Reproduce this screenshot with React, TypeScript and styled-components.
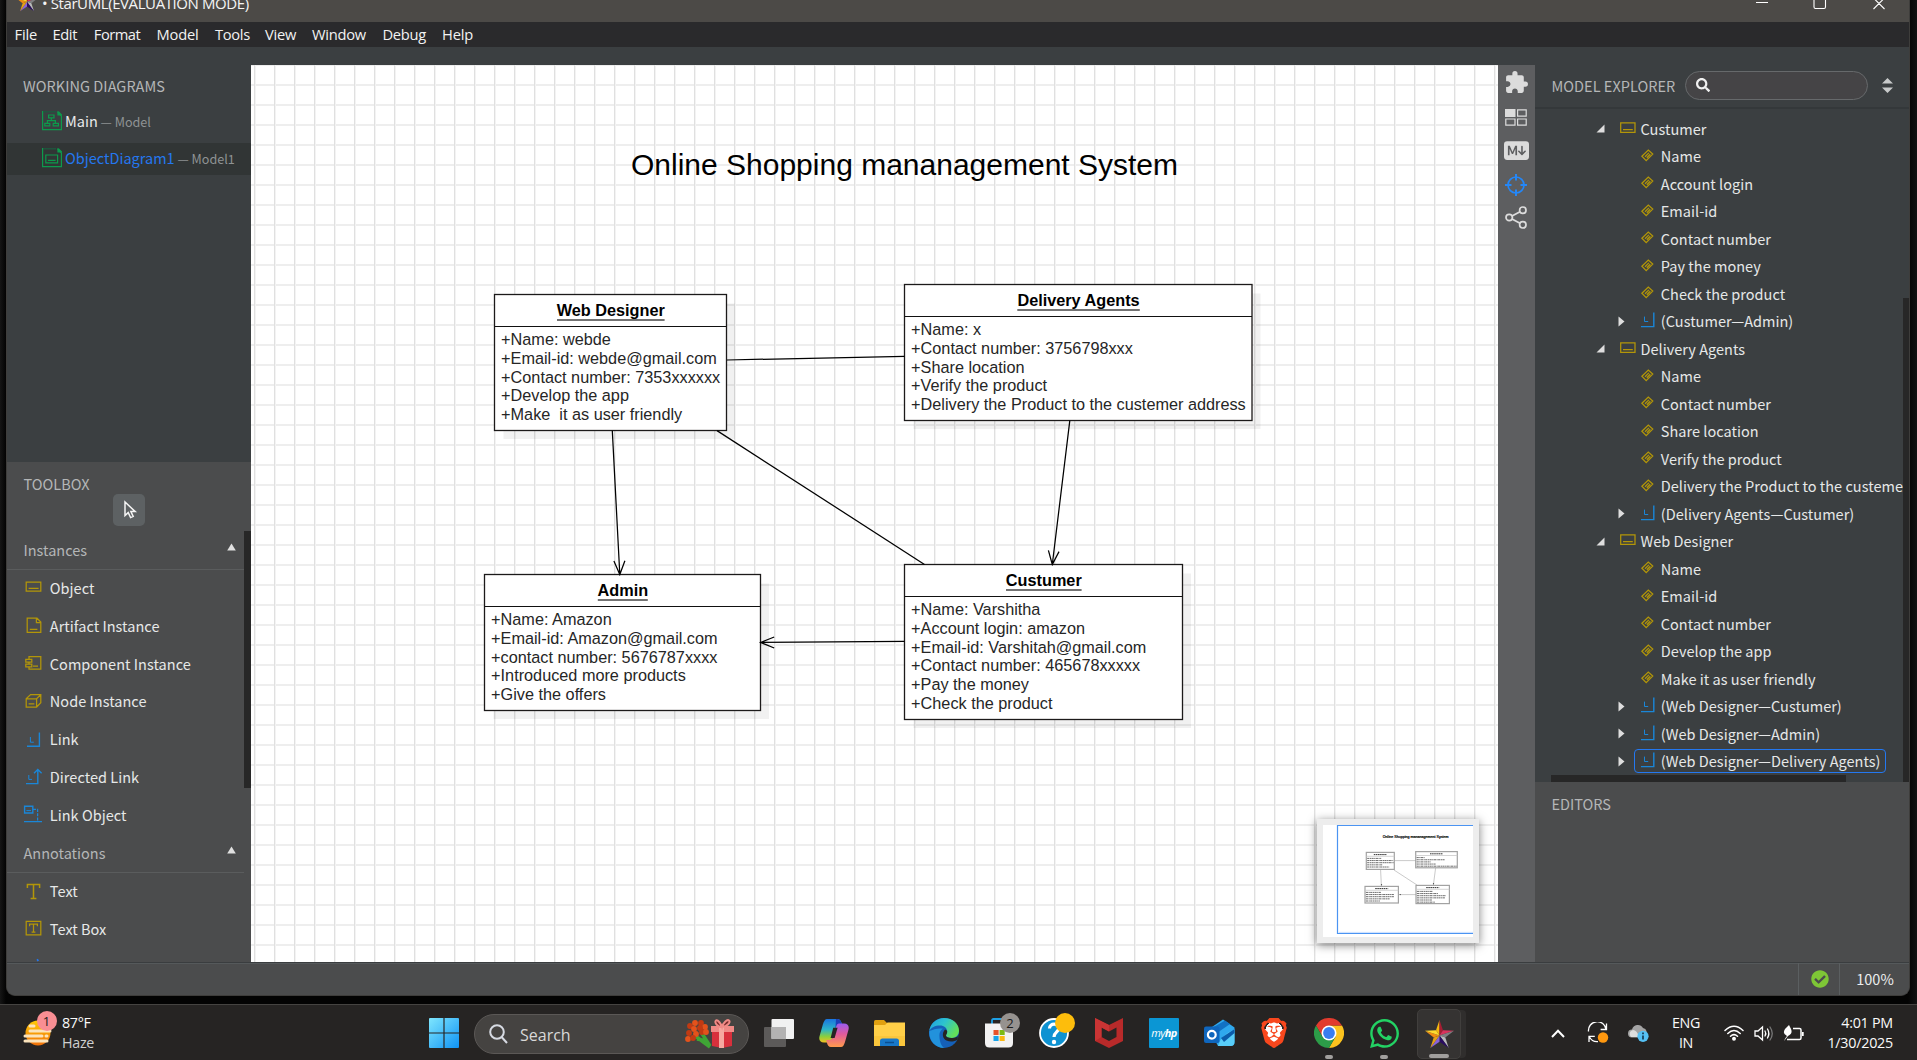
import React from "react";
import styled, { createGlobalStyle } from "styled-components";
import { MdExtension } from "react-icons/md";
import { BsMarkdownFill } from "react-icons/bs";
import { FaSearch, FaWhatsapp, FaCheckCircle } from "react-icons/fa";
import { SiBrave } from "react-icons/si";

const UI = `"Noto Sans CJK SC", "Noto Sans", sans-serif`;
const SYS = `"Open Sans", "Noto Sans", sans-serif`;
const GOLD = "#b39608";
const BLUE = "#1a86d8";

const Global = createGlobalStyle`
  *, *::before, *::after { box-sizing: border-box; }
  html, body { margin: 0; background: #050505; }
  body { overflow: hidden; font-family: ${UI}; }
  svg { display: block; flex: none; }
`;

const Desktop = styled.div`
  width: 1917px;
  height: 1060px;
  display: flex;
  flex-direction: column;
  background: linear-gradient(90deg, #151515 0, #030303 6px, #030303 1908px, #121212 1917px);
  overflow: hidden;
`;

const AppWindow = styled.div`
  width: 1904px;
  height: 996px;
  margin: 0 0 8px 6px;
  flex: none;
  display: flex;
  flex-direction: column;
  border: 1px solid #3e3d3b;
  border-top: 0;
  border-radius: 0 0 9px 9px;
  overflow: hidden;
  background: #4b4c4d;
`;

/* ---------- title and menu ---------- */

const TitleBar = styled.div`
  height: 22px;
  flex: none;
  display: flex;
  background: #4c4a47;
  color: #f4f4f4;
  font: 15px/22px ${SYS};
`;
const TitleText = styled.div`
  width: 1706px;
  padding-left: 6px;
  margin-top: -8px;
  white-space: pre;
  letter-spacing: -0.41px;
`;
const StarSlot = styled.div`
  width: 29px;
  padding-left: 9px;
  margin-top: -10px;
`;

const MenuBar = styled.nav`
  height: 25px;
  flex: none;
  display: flex;
  padding-left: 7.5px;
  background: #2a2a2c;
`;
const MenuItem = styled.span<{ $w: number; $ls: number }>`
  width: ${(p) => p.$w}px;
  flex: none;
  color: #f2f2f2;
  font: 14.7px/25px ${SYS};
  letter-spacing: ${(p) => p.$ls}px;
  white-space: nowrap;
`;

/* ---------- main layout ---------- */

const Gutter = styled.div`
  height: 18px;
  flex: none;
  background: #3b3f41;
`;
const Body = styled.div`
  height: 897px;
  flex: none;
  display: flex;
`;
const Sidebar = styled.aside`
  width: 244px;
  flex: none;
  display: flex;
  flex-direction: column;
`;
const PanelTitle = styled.div<{ $ls?: number }>`
  color: #b4b6b7;
  font-size: 14.5px;
  line-height: 24px;
  letter-spacing: ${(p) => p.$ls ?? 0}px;
  white-space: nowrap;
`;

const Working = styled.section`
  height: 397px;
  flex: none;
  background: #3b3f41;
  padding-top: 9px;
  > ${PanelTitle} {
    padding-left: 16px;
    margin-bottom: 8px;
    letter-spacing: 0.05px;
  }
`;
const DiagramRow = styled.div<{ $active?: boolean }>`
  height: ${(p) => (p.$active ? 32 : 37)}px;
  display: flex;
  align-items: center;
  padding: ${(p) => (p.$active ? "0 0 3px 35px" : "0 0 8px 35px")};
  gap: 3px;
  background: ${(p) => (p.$active ? "#313535" : "transparent")};
  color: ${(p) => (p.$active ? "#2478f0" : "#e8eaea")};
  font-size: 14.5px;
  white-space: nowrap;
`;
const Muted = styled.span`
  color: #8f9394;
  font-size: 12.6px;
  white-space: pre;
`;

const Toolbox = styled.section`
  flex: 1;
  min-height: 0;
  overflow: hidden;
  background: #4b4c4d;
  padding-top: 10px;
  > ${PanelTitle} {
    padding-left: 16.5px;
  }
`;
const CursorButton = styled.div`
  width: 32px;
  height: 32px;
  margin: -2px 0 5px 106px;
  padding-left: 2px;
  display: flex;
  align-items: center;
  justify-content: center;
  border-radius: 5px;
  background: #5d6163;
`;
const ToolScroll = styled.div`
  display: flex;
  align-items: flex-start;
`;
const ToolList = styled.div`
  width: 237px;
`;
const ScrollThumb = styled.div`
  width: 7px;
  height: 257px;
  background: #272727;
`;
const ToolGroup = styled.div`
  height: 38.6px;
  display: flex;
  align-items: center;
  justify-content: space-between;
  padding: 0 8.5px 0 16.5px;
  border-bottom: 1px solid #5a5c5d;
  color: #b4b6b7;
  font-size: 14.5px;
  svg {
    margin-bottom: 6px;
  }
`;
const ToolItem = styled.div`
  height: 37.8px;
  display: flex;
  align-items: center;
  padding: 0 0 2px 17px;
  gap: 7.8px;
  color: #e6e8e8;
  font-size: 14.5px;
  letter-spacing: 0.03px;
  white-space: nowrap;
`;

const CanvasArea = styled.main`
  position: relative;
  width: 1247px;
  flex: none;
  overflow: hidden;
  background-color: #fff;
  background-image: linear-gradient(90deg, #e0e0e0 1px, #f3f3f3 1px 2px, transparent 2px),
    linear-gradient(#eeeeee 2px, transparent 2px);
  background-size: 20px 20px;
  background-position: 3px 0, 0 -1px;
`;
const ShapeText = styled.text`
  font: 16.25px "Liberation Sans", Arial, sans-serif;
  fill: #262626;
  white-space: pre;
`;
const ShapeTitle = styled.text`
  font: bold 16.25px "Liberation Sans", Arial, sans-serif;
  fill: #000;
  text-anchor: middle;
`;
const CanvasTitle = styled.text`
  font: 30px "Liberation Sans", Arial, sans-serif;
  fill: #000;
`;
const TinyTitle = styled.text`
  font: 3.6px "Liberation Sans", Arial, sans-serif;
  fill: #000;
  stroke: #000;
  stroke-width: 0.2px;
`;
const Minimap = styled.div`
  position: absolute;
  left: 1066px;
  top: 754px;
  width: 162px;
  height: 124px;
  border: 6px solid #ededed;
  background: #fff;
  box-shadow: 0 2px 9px rgba(0, 0, 0, 0.5);
  overflow: hidden;
`;

const ToolStrip = styled.div`
  width: 37px;
  flex: none;
  background: #5d5e60;
  display: flex;
  flex-direction: column;
  align-items: center;
  padding: 0 1px 0 0;
  color: #dcdcdc;
`;
const StripIcon = styled.div<{ $h: number }>`
  height: ${(p) => p.$h}px;
  display: flex;
  align-items: center;
`;

const Explorer = styled.aside`
  flex: 1;
  min-width: 0;
  display: flex;
  flex-direction: column;
`;
const ExplorerHead = styled.div`
  height: 44px;
  flex: none;
  display: flex;
  align-items: center;
  padding: 0 16px 2px 16px;
  background: #3b3f41;
  border-bottom: 2px solid #34383a;
  > ${PanelTitle} {
    padding: 2px 0 0 0.5px;
    letter-spacing: 0.03px;
  }
`;
const SearchField = styled.div`
  width: 183px;
  height: 29px;
  margin: 0 14px 0 auto;
  display: flex;
  align-items: center;
  padding-left: 10px;
  border: 1px solid #66696b;
  border-radius: 15px;
  background: #454446;
  color: #f0f0f0;
`;
const TreeArea = styled.div`
  height: 666px;
  flex: none;
  display: flex;
  justify-content: flex-end;
  background: #3b3f41;
  padding-left: 16px;
`;
const TreeClip = styled.div`
  flex: 1;
  min-width: 0;
  padding-top: 6px;
  overflow: hidden;
`;
const TreeThumb = styled.div`
  width: 6px;
  height: 477px;
  align-self: flex-end;
  background: #272727;
`;
const TreeFoot = styled.div`
  height: 7px;
  flex: none;
  display: flex;
  justify-content: space-between;
  background: #3b3f41;
  padding-left: 16px;
`;
const TreeThumbH = styled.div`
  width: 295px;
  height: 7px;
  background: #272727;
`;
const TreeCorner = styled.div`
  width: 6px;
  height: 7px;
  background: #272727;
`;
const TreeRow = styled.div<{ $leaf: boolean }>`
  height: 27.5px;
  display: flex;
  align-items: center;
  padding-left: ${(p) => (p.$leaf ? 66.5 : 44.5)}px;
  color: #e6e8e8;
  font-size: 14.5px;
  letter-spacing: 0.02px;
  white-space: nowrap;
`;
const Twisty = styled.span<{ $w: number }>`
  width: ${(p) => p.$w}px;
  flex: none;
`;
const NodeLabel = styled.span<{ $selected?: boolean; $gap: number }>`
  height: 24px;
  flex: none;
  display: flex;
  align-items: center;
  gap: ${(p) => p.$gap}px;
  padding: 0 5px 0 6px;
  line-height: 22px;
  border: 1px solid ${(p) => (p.$selected ? "#2478f0" : "transparent")};
  border-radius: 4px;
  > svg {
    margin-bottom: 2px;
  }
`;
const Editors = styled.div`
  flex: 1;
  background: #4b4c4d;
  padding: 10px 16.5px;
`;

const StatusBar = styled.footer`
  flex: 1;
  display: flex;
  justify-content: flex-end;
  background: #4b4c4d;
  border-top: 1px solid #3a3d3f;
  box-shadow: inset 0 1px 0 #55595b;
`;
const StatusCell = styled.div<{ $w: number }>`
  width: ${(p) => p.$w}px;
  display: flex;
  align-items: center;
  justify-content: center;
  padding: 0 0 1px 1px;
  border-left: 1px solid #5b5f61;
  color: #eceeee;
  font-size: 14.5px;
`;

/* ---------- taskbar ---------- */

const Taskbar = styled.div`
  height: 56px;
  flex: none;
  display: flex;
  padding-top: 1px;
  background: #262423;
  border-top: 1px solid #454341;
  font-family: ${SYS};
  color: #fff;
`;
const Weather = styled.div`
  width: 420px;
  padding-left: 22px;
  display: flex;
  align-items: center;
  gap: 6px;
`;
const TwoLines = styled.div<{ $align: string; $w: number; $ls?: number }>`
  width: ${(p) => p.$w}px;
  text-align: ${(p) => p.$align};
  font-size: 14.3px;
  line-height: 20px;
  letter-spacing: ${(p) => p.$ls ?? -0.3}px;
  white-space: nowrap;
  color: #fafafa;
`;
const Dim = styled.div`
  color: #cfcfcf;
`;
const StartSlot = styled.div`
  width: 54px;
  display: flex;
  align-items: center;
  padding-left: 8.5px;
`;
const SearchPill = styled.div`
  width: 275px;
  height: 40px;
  margin: 8px 5px 0 0;
  display: flex;
  align-items: center;
  padding: 0 14px;
  gap: 12px;
  border: 1px solid #5b5856;
  border-radius: 20px;
  background: #454341;
  color: #d8d8d8;
  font-size: 16px;
  > span {
    flex: 1;
    padding-top: 1px;
    letter-spacing: 0;
  }
`;
const TaskButton = styled.div<{ $active?: boolean }>`
  position: relative;
  width: 50px;
  margin-right: 5px;
  display: flex;
  flex-direction: column;
  align-items: center;
  justify-content: center;
  flex: none;
  ${(p) =>
    p.$active &&
    `width:44px;height:50px;margin:3px 0 0 3px;border-radius:5px;background:#353332;border:1px solid #413f3d;box-shadow:6px 0 0 -1px #302e2d;`}
`;
const Running = styled.i<{ $w: number; $b: number }>`
  position: absolute;
  bottom: ${(p) => p.$b}px;
  width: ${(p) => p.$w}px;
  height: 4px;
  border-radius: 2px;
  background: #a19f9d;
`;
const Badge = styled.b<{ $c: string; $x: number; $y: number }>`
  position: absolute;
  left: ${(p) => p.$x}px;
  top: ${(p) => p.$y}px;
  width: 20px;
  height: 20px;
  border-radius: 50%;
  background: ${(p) => p.$c};
  color: #1c1c1c;
  font: 13px/20px ${SYS};
  text-align: center;
`;
const WeatherIcon = styled.div`
  position: relative;
`;
const HpTile = styled.div`
  width: 30px;
  height: 30px;
  background: #0b96d4;
  color: #fff;
  font: italic 11px/29px ${SYS};
  letter-spacing: -0.6px;
  text-align: center;
  border-radius: 1px;
`;
const BraveMark = styled.div`
  display: flex;
  justify-content: center;
  width: 30px;
  background: radial-gradient(ellipse 9px 11px at 50% 48%, #fff 98%, transparent 100%);
`;
const Tray = styled.div`
  margin-left: auto;
  padding-right: 24px;
  display: flex;
  align-items: center;
`;
const TraySlot = styled.div<{ $w: number }>`
  width: ${(p) => p.$w}px;
  flex: none;
`;

/* ---------- icons ---------- */

const Star = ({ size }: { size: number }) => (
  <svg width={size} height={size} viewBox="0 0 30 30">
    <path d="M15 0L15 16L11.4 10.6Z" fill="#f6b90e" />
    <path d="M15 0L18.6 10.6L15 16Z" fill="#a51d33" />
    <path d="M18.6 10.6L30 11L15 16Z" fill="#d9325c" />
    <path d="M30 11L21 18L15 16Z" fill="#7e7e80" />
    <path d="M21 18L24.5 29L15 16Z" fill="#b9b9bb" />
    <path d="M24.5 29L15 22.6L15 16Z" fill="#2a0d60" />
    <path d="M15 22.6L5.5 29L15 16Z" fill="#8a63d8" />
    <path d="M5.5 29L9 18L15 16Z" fill="#e3a117" />
    <path d="M9 18L0 11L15 16Z" fill="#f08c12" />
    <path d="M0 11L11.4 10.6L15 16Z" fill="#ffdc2e" />
  </svg>
);

const ObjectIcon = () => (
  <svg width="16" height="12" viewBox="0 0 16 12" fill="none" stroke={GOLD} strokeWidth="1.25">
    <path d="M.7 .9H15V10.4H.7ZM3 7.6H12.8" />
  </svg>
);
const SlotIcon = () => (
  <svg width="13" height="13" viewBox="0 0 13 13" fill="none" stroke={GOLD} strokeWidth="1.3">
    <path d="M.9 7.3L7.3 1.1L11.7 5.1L5.2 11.6ZM4 7.7L7.9 3.9M5.8 8.8L9.3 5.3" />
  </svg>
);
const LinkIcon = () => (
  <svg width="14" height="16" viewBox="0 0 14 16" fill="none" stroke={BLUE} strokeWidth="1.4">
    <path d="M0 14.6H12.8V.6" />
    <path d="M3.5 4.6V9.500H7.2" strokeWidth="1" />
  </svg>
);

const toolIcons: Record<string, React.ReactNode> = {
  Object: <path d="M2.2 4.2H16.8V13.2H2.2ZM4.6 10.4H14.6" />,
  "Artifact Instance": <path d="M3.2 2.2H13L16.8 6V16.4H3.2ZM12.4 2.2V6.6H16.8M5.8 13.4H13.4" />,
  "Component Instance": (
    <path d="M5 5.4V2.6H16.8V15H5V12.8M5 8V10.2M1.8 5.4H7.8V8H1.8ZM1.8 10.2H7.8V12.8H1.8ZM9 12H14" />
  ),
  "Node Instance": (
    <path d="M2.2 6.8L6.6 2.6H16.8V10.8L12.6 15H2.2ZM2.2 6.8H12.6V15M12.6 6.8L16.8 2.6M4.6 11.8H10.4" />
  ),
  Link: (
    <g stroke={BLUE}>
      <path d="M3 16.2H15.4V2.6" strokeWidth="1.4" />
      <path d="M6.4 7V12.2H9.8" strokeWidth="1" />
    </g>
  ),
  "Directed Link": (
    <g stroke={BLUE}>
      <path d="M2 16.6H13.8V2.4M10 6.2L13.8 2.4L17.6 6.2" strokeWidth="1.4" />
      <path d="M4.8 8V12.4H8" strokeWidth="1" />
    </g>
  ),
  "Link Object": (
    <g stroke={BLUE}>
      <path d="M.6 1.2H8.8V8H.6ZM0 16.6H18" strokeWidth="1.4" />
      <path d="M2.4 5.6H7" strokeWidth="1" />
      <path d="M9 4.4H13.6V16" strokeDasharray="3 1.2" />
    </g>
  ),
  Text: <path d="M3.4 6V2.6H15.6V6M9.5 2.6V16.4M6.6 16.4H12.4" strokeWidth="1.5" />,
  "Text Box": <path d="M2.2 2.4H16.8V15.8H2.2ZM5.6 7.2V5.2H13.4V7.2M9.5 5.2V13.2M7.6 13.2H11.4" />,
  Note: <path d="M13 3.6L14.4 2.6" stroke="#2478f0" strokeWidth="2" />,
};

const DiagramIcon = ({ object }: { object?: boolean }) => (
  <svg width="20" height="20" viewBox="0 0 20 20" fill="none" stroke="#0d9a4c" strokeWidth="1.2">
    <path d="M.6 0V18.6H19.4V5L15.6 1.2" />
    <path d="M1 .8H14" stroke="#1d5c40" />
    <path d="M15.4 0V4.6H20V3.4L17 .4Z" fill="#0d9a4c" stroke="none" />
    {object ? (
      <path d="M3.8 7H15.6V14.8H3.8ZM6 12.4H13.6" />
    ) : (
      <path d="M6.6 4H12V6.8H6.6ZM9.3 6.8V9.6M5.4 12.4V9.6H13.4V12.4M2.8 12.4H7.8V14.8H2.8ZM11.2 12.4H16.4V14.8H11.2Z" />
    )}
  </svg>
);

const UpTriangle = () => (
  <svg width="9" height="8" viewBox="0 0 9 8">
    <path d="M4.5 .4L8.8 7.6H.2Z" fill="#e0e0e0" />
  </svg>
);

/* ---------- diagram data ---------- */

type Shape = { title: string; x: number; y: number; w: number; h: number; lines: string[] };
const shapes: Shape[] = [
  {
    title: "Web Designer", x: 494.5, y: 294.5, w: 232, h: 136,
    lines: ["+Name: webde", "+Email-id: webde@gmail.com", "+Contact number: 7353xxxxxx", "+Develop the app", "+Make\u00a0 it as user friendly"],
  },
  {
    title: "Delivery Agents", x: 904.5, y: 284.5, w: 347.5, h: 136,
    lines: ["+Name: x", "+Contact number: 3756798xxx", "+Share location", "+Verify the product", "+Delivery the Product to the custemer address"],
  },
  {
    title: "Admin", x: 484.5, y: 574.5, w: 276, h: 136,
    lines: ["+Name: Amazon", "+Email-id: Amazon@gmail.com", "+contact number: 5676787xxxx", "+Introduced more products", "+Give the offers"],
  },
  {
    title: "Custumer", x: 904.5, y: 564.5, w: 278, h: 155,
    lines: ["+Name: Varshitha", "+Account login: amazon", "+Email-id: Varshitah@gmail.com", "+Contact number: 465678xxxxx", "+Pay the money", "+Check the product"],
  },
];
const titleWidths: Record<string, number> = { "Web Designer": 107.6, "Delivery Agents": 122.5, Admin: 50, Custumer: 75.6 };

const ObjectShape = ({ s }: { s: Shape }) => {
  const cx = s.x + s.w / 2 + 0.3;
  const half = titleWidths[s.title] / 2;
  return (
    <g>
      <rect x={s.x + 9} y={s.y + 9} width={s.w - 0.5} height={s.h - 0.5} fill="rgba(0,0,0,.055)" />
      <rect x={s.x} y={s.y} width={s.w} height={s.h} fill="#fff" stroke="#1c1a1a" strokeWidth="1.3" />
      <path d={`M${s.x} ${s.y + 32}H${s.x + s.w}`} stroke="#111" strokeWidth="1.2" />
      <ShapeTitle x={cx} y={s.y + 21.5}>{s.title}</ShapeTitle>
      <path d={`M${cx - half} ${s.y + 25.5}H${cx + half}`} stroke="#444" strokeWidth="1.5" />
      {s.lines.map((l, i) => (
        <ShapeText key={i} x={s.x + 6.6} y={s.y + 50.5 + i * 18.75}>{l}</ShapeText>
      ))}
    </g>
  );
};

const Diagram = () => (
  <svg width="1247" height="898" viewBox="251 65 1247 898">
    <CanvasTitle x="631" y="175">Online Shopping mananagement System</CanvasTitle>
    {shapes.map((s) => <ObjectShape key={s.title} s={s} />)}
    <g fill="none" stroke="#000" strokeWidth="1.25">
      <path d="M727 360L904.5 356.3" />
      <path d="M612.3 430.6L619.8 574.5M613.9 561L619.8 574.5L624.9 560.8" />
      <path d="M717 430.6L924.5 564.5" />
      <path d="M1069.8 420.6L1052.3 564.5M1048.4 550.4L1052.3 564.5L1059 551.6" />
      <path d="M904.5 641.3L760.6 642.4M774.2 637L760.6 642.4L774.2 648" />
    </g>
  </svg>
);

const miniShapes = [
  { x: 43.3, y: 27.4, w: 28, h: 17, n: [14, 26, 27, 15, 22] },
  { x: 92.7, y: 26.6, w: 41.6, h: 16.2, n: [8, 28, 14, 19, 40] },
  { x: 42, y: 61.4, w: 33.4, h: 16.6, n: [15, 28, 28, 24, 14] },
  { x: 93, y: 60.4, w: 33.4, h: 18.2, n: [16, 21, 29, 28, 15, 18] },
];
const Overview = () => (
  <svg width="150" height="112" viewBox="0 0 150 112">
    <g stroke="#c4c4c4" strokeWidth=".9">
      <path d="M71 35.6H93M57.6 45L58.4 61M71 45L94 60M112.6 43L110.4 60M76 69.6H93" />
    </g>
    <path d="M57.8 59H59.2L58.5 61ZM109.8 58H111.2L110.5 60ZM78 68.9V70.3L76 69.6Z" fill="#555" />
    <TinyTitle x="59.8" y="13.2" textLength="65.8">Online Shopping mananagement System</TinyTitle>
    {miniShapes.map((m, i) => (
      <g key={i}>
        <rect x={m.x} y={m.y} width={m.w} height={m.h} fill="#fff" stroke="#a2a2a2" strokeWidth="1.2" />
        <path d={`M${m.x} ${m.y + 3.9}h${m.w}`} stroke="#c9c9c9" strokeWidth=".8" />
        <path d={`M${m.x + m.w / 2 - 6.5} ${m.y + 2.2}h13`} stroke="#333" strokeWidth="1" strokeDasharray="1.6 .5" />
        {m.n.map((w, j) => (
          <path key={j} d={`M${m.x + 0.9} ${m.y + 6 + j * 2.15}h${Math.min(w, m.w - 1.6)}`} stroke="#3c3c3c" strokeWidth=".75" strokeDasharray="2.2 .5 1.2 .4" />
        ))}
      </g>
    ))}
    <path d="M150 .5H14.5V108.5H150" fill="none" stroke="#4b94f2" strokeWidth="1.2" />
    <path d="M150 107.4H15.6" stroke="#bcd8ff" strokeWidth=".8" />
  </svg>
);

/* ---------- tree data ---------- */

type Kind = "object" | "slot" | "link";
const tree: [Kind, string][] = [
  ["object", "Custumer"], ["slot", "Name"], ["slot", "Account login"], ["slot", "Email-id"],
  ["slot", "Contact number"], ["slot", "Pay the money"], ["slot", "Check the product"], ["link", "(Custumer—Admin)"],
  ["object", "Delivery Agents"], ["slot", "Name"], ["slot", "Contact number"], ["slot", "Share location"],
  ["slot", "Verify the product"], ["slot", "Delivery the Product to the custemer address"], ["link", "(Delivery Agents—Custumer)"],
  ["object", "Web Designer"], ["slot", "Name"], ["slot", "Email-id"], ["slot", "Contact number"],
  ["slot", "Develop the app"], ["slot", "Make it as user friendly"], ["link", "(Web Designer—Custumer)"],
  ["link", "(Web Designer—Admin)"], ["link", "(Web Designer—Delivery Agents)"],
];
const labelGap: Record<Kind, number> = { object: 4.5, slot: 6.8, link: 5.8 };

const menu: [string, number, number][] = [
  ["File", 38, -0.2], ["Edit", 41.3, -0.4], ["Format", 62.7, -0.5], ["Model", 58.6, -0.2], ["Tools", 50, -0.35],
  ["View", 47, -0.3], ["Window", 70.3, -0.3], ["Debug", 59.7, -0.25], ["Help", 40, -0.2],
];

/* ---------- taskbar icons ---------- */

const TaskViewIcon = () => (
  <svg width="30" height="30" viewBox="0 0 30 30">
    <rect x="0" y="9" width="22" height="20" rx="1" fill="#5c5a59" />
    <rect x="7.500" y="1" width="22.500" height="20" rx="1" fill="#f1f1f1" />
    <rect x="7.500" y="9" width="14.500" height="12" fill="#b3b2b2" />
  </svg>
);
const CopilotIcon = () => (
  <svg width="30" height="30" viewBox="0 0 30 30">
    <defs>
      <linearGradient id="cpA" x1="0" y1="0" x2="0" y2="1">
        <stop offset="0" stopColor="#1a74e0" /><stop offset=".45" stopColor="#2cb5c8" /><stop offset=".75" stopColor="#8ccf3c" /><stop offset="1" stopColor="#f4c020" />
      </linearGradient>
      <linearGradient id="cpB" x1="0" y1="0" x2="0" y2="1">
        <stop offset="0" stopColor="#9a5cf0" /><stop offset=".45" stopColor="#e05a9c" /><stop offset="1" stopColor="#ff9a4c" />
      </linearGradient>
    </defs>
    <path d="M8 1H18.500C21 1 22 3 22.600 5L23.400 8H20C17.500 8 16.500 9.500 16 11L12.600 22C12 24 11 24.500 9 24.500H5C1 24.500 -.5 21.500 .6 18L4 6C5 3 6 1 8 1Z" fill="url(#cpA)" />
    <path d="M17 1C21 1 22 3.500 22.600 5L23.400 8H20C18 8 17 8.600 16.400 10Z" fill="#1b3fb8" />
    <path d="M22 29H12C9.500 29 8.600 27 8 25L7.200 22H10C12.500 22 13.500 20.500 14 19L17.400 8C18 6 19 5.500 21 5.500H25C29 5.500 30.500 8.500 29.400 12L26 24C25 27 24 29 22 29Z" fill="url(#cpB)" />
    <path d="M14.200 9.800L18.600 9.800L15.600 20H11.600Z" fill="#262423" />
  </svg>
);
const FolderIcon = () => (
  <svg width="31" height="30" viewBox="0 0 31 30">
    <path d="M0 3.500Q0 2 1.500 2H10L13 5V9H0Z" fill="#e0a010" />
    <path d="M0 7H11L13.500 4.500H31V28H0Z" fill="#ffcf48" />
    <path d="M0 18H31V28H0Z" fill="#f7bf35" opacity=".6" />
    <path d="M6 28V23Q6 20.500 8.500 20.500H22.500Q25 20.500 25 23V28Z" fill="#1878c8" />
    <path d="M11 24.500H20" stroke="#0b4f90" strokeWidth="1.500" />
  </svg>
);
const EdgeIcon = () => (
  <svg width="30" height="30" viewBox="0 0 30 30">
    <defs>
      <linearGradient id="edA" x1="0" y1="0" x2="1" y2=".5">
        <stop offset="0" stopColor="#1f9be0" /><stop offset=".5" stopColor="#2dc3cf" /><stop offset="1" stopColor="#62e05a" />
      </linearGradient>
    </defs>
    <circle cx="15" cy="15" r="15" fill="#1560b8" />
    <path d="M.2 13C1.500 5 8 0 15 0C24 0 30 6 30 12.500C30 17 27 20 22.500 20C19 20 17 18.800 17 17.500C17 16.500 18.200 16 18.200 13.600C18.200 10 15 7.500 11 7.500C6 7.500 2 9.500 .2 13Z" fill="url(#edA)" />
    <path d="M10.400 17C10.400 14 12 12 14 10.800C10 9.500 4 11.500 .4 13C-.6 22 6 30 15 30C11.500 27 10.400 22 10.400 17Z" fill="#2292dc" />
    <path d="M18.200 13.600C18.200 16 17 16.500 17 17.500C17 18.800 19 20 22.500 20C24.500 20 26.500 19.500 28.600 18.400L28.800 21.500C25 24 21 24 17.500 22.500C13.500 20.500 12.500 15 16 11.400Q18.200 12 18.200 13.600Z" fill="#262423" />
    <path d="M29.600 16V21L28.600 23V18.400Z" fill="#262423" />
  </svg>
);
const StoreIcon = () => (
  <svg width="30" height="30" viewBox="0 0 30 30">
    <path d="M8 6V2.500Q8 1 9.500 1H18" fill="none" stroke="#1ea0e6" strokeWidth="1.800" />
    <path d="M1 5.500H29V25Q29 29.500 24.500 29.500H5.500Q1 29.500 1 25Z" fill="#f2f2f2" />
    <path d="M9.500 12H14.600V17H9.500Z" fill="#e8532c" /><path d="M15.600 12H20.700V17H15.600Z" fill="#7cba15" />
    <path d="M9.500 18H14.600V23H9.500Z" fill="#18a3ea" /><path d="M15.600 18H20.700V23H15.600Z" fill="#fab813" />
  </svg>
);
const HelpIcon = () => (
  <svg width="30" height="30" viewBox="0 0 30 30">
    <circle cx="15" cy="15" r="14" fill="#0e92d2" stroke="#fff" strokeWidth="1.800" />
    <path d="M10.500 10.500C10.500 4.500 19.800 5 19.800 10.300C19.800 14 15 14 15 19" fill="none" stroke="#fff" strokeWidth="3.200" />
    <circle cx="15" cy="24" r="2.200" fill="#fff" />
  </svg>
);
const McAfeeIcon = () => (
  <svg width="28" height="30" viewBox="0 0 28 30">
    <path d="M0 0L14 7L28 0V23L14 30L0 23Z" fill="#b82a2a" />
    <path d="M6.500 9.500L14 13.500L21.500 9.500V19L14 23L6.500 19Z" fill="#262423" />
    <path d="M0 0L14 7V13.500L6.500 9.500V19L0 23Z" fill="#c93434" />
  </svg>
);
const OutlookIcon = () => (
  <svg width="31" height="30" viewBox="0 0 31 30">
    <path d="M5 11L19 1.500L30.500 9.500V24Q30.500 28 26.500 28H14Z" fill="#2fa8ee" />
    <path d="M8 10L21 2.500L26 6L13 15Z" fill="#1272c4" />
    <path d="M14 28Q16 18 30.500 11V24Q30.500 28 26.500 28Z" fill="#58cdf8" />
    <path d="M17 20L30.500 11V15L20 24Z" fill="#0b5cab" />
    <rect x="0" y="8.500" width="15.500" height="16.500" rx="2" fill="#0f66bd" />
    <circle cx="7.800" cy="16.800" r="3.900" fill="none" stroke="#fff" strokeWidth="2.200" />
  </svg>
);
const ChromeIcon = () => (
  <svg width="30" height="30" viewBox="0 0 30 30">
    <path d="M15 7.500H28A15 15 0 0 1 15 30L21.500 18.800Z" fill="#fcc31e" />
    <path d="M8.500 18.800L2 7.500A15 15 0 0 1 28 7.500H15Z" fill="#e23b2e" />
    <path d="M2 7.500L8.500 18.800L15 22.500L21.500 18.800L15 30A15 15 0 0 1 2 7.500Z" fill="#2c9c48" />
    <circle cx="15" cy="15" r="7.500" fill="#fff" />
    <circle cx="15" cy="15" r="5.900" fill="#3a7df0" />
  </svg>
);
const GiftIcon = () => (
  <svg width="49" height="30" viewBox="0 0 49 30">
    <path d="M9 16L25 28M12 20L22 22M16 13L25 27" stroke="#3fa535" strokeWidth="3.500" />
    {[[5, 7], [10, 4], [16, 4], [20, 8], [15, 9], [9, 10], [4, 14], [11, 15], [17, 13], [3, 20], [8, 19], [21, 13]].map(([x, y], i) => (
      <circle key={i} cx={x} cy={y} r="2.900" fill={i % 2 ? "#e4521b" : "#c23a12"} />
    ))}
    <path d="M27 8L47 8V27L37 29L27 27Z" fill="#d8303c" />
    <path d="M26 7H49V13H26Z" fill="#f08a86" />
    <path d="M34 8H39V29H34Z" fill="#f6a8a0" />
    <path d="M37 8C32 8 29 3 31 1.500C33 .5 36 5 37 8C38 4 42 0 44 1.500C46 3 42 8 37 8Z" fill="#7a2a2a" stroke="#f08a86" strokeWidth="2" />
  </svg>
);

export default function App() {
  return (
    <>
      <Global />
      <Desktop>
        <AppWindow>
          <TitleBar>
            <StarSlot><Star size={22} /></StarSlot>
            <TitleText>• StarUML(EVALUATION MODE)</TitleText>
            <svg width="160" height="22" viewBox="1735.500 0 160 22" fill="none" stroke="#fff" strokeWidth="1.1">
              <path d="M1749.500 2.500H1761.500M1807.500 -4V7Q1807.500 8.500 1809 8.500H1817.500Q1819 8.500 1819 7V-4M1867 -2L1878 9M1878 -2L1867 9" />
            </svg>
          </TitleBar>
          <MenuBar>
            {menu.map(([t, w, ls]) => <MenuItem key={t} $w={w} $ls={ls}>{t}</MenuItem>)}
          </MenuBar>
          <Gutter />
          <Body>
            <Sidebar>
              <Working>
                <PanelTitle>WORKING DIAGRAMS</PanelTitle>
                <DiagramRow><DiagramIcon /><span>Main<Muted> — Model</Muted></span></DiagramRow>
                <DiagramRow $active><DiagramIcon object /><span>ObjectDiagram1<Muted> — Model1</Muted></span></DiagramRow>
              </Working>
              <Toolbox>
                <PanelTitle>TOOLBOX</PanelTitle>
                <CursorButton>
                  <svg width="16" height="20" viewBox="0 0 16 20" fill="none" stroke="#f4f4f4" strokeWidth="1.500">
                    <path d="M3 2V15.500L6.200 12.600L8.600 17.600L11.200 16.400L8.900 11.600H13.200Z" />
                  </svg>
                </CursorButton>
                <ToolScroll>
                  <ToolList>
                    <ToolGroup>Instances<UpTriangle /></ToolGroup>
                    {Object.entries(toolIcons).slice(0, 7).map(([t, icon]) => (
                      <ToolItem key={t}>
                        <svg width="18" height="18" viewBox="0 0 18 18" fill="none" stroke={GOLD} strokeWidth="1.250" overflow="visible">{icon}</svg>
                        {t}
                      </ToolItem>
                    ))}
                    <ToolGroup>Annotations<UpTriangle /></ToolGroup>
                    {Object.entries(toolIcons).slice(7).map(([t, icon]) => (
                      <ToolItem key={t}>
                        <svg width="18" height="18" viewBox="0 0 18 18" fill="none" stroke={GOLD} strokeWidth="1.250" overflow="visible">{icon}</svg>
                        {t !== "Note" && t}
                      </ToolItem>
                    ))}
                  </ToolList>
                  <ScrollThumb />
                </ToolScroll>
              </Toolbox>
            </Sidebar>

            <CanvasArea>
              <Diagram />
              <Minimap><Overview /></Minimap>
            </CanvasArea>

            <ToolStrip>
              <StripIcon $h={35}><MdExtension size={25} /></StripIcon>
              <StripIcon $h={34}>
                <svg width="22" height="17" viewBox="0 0 22 17" fill="none" stroke="#dcdcdc" strokeWidth="1.200">
                  <rect x="0" y="0" width="10.500" height="8" fill="#dcdcdc" stroke="none" />
                  <path d="M12.600 .8H21.200V7.200H12.600ZM.8 10H10V16.200H.8ZM12.600 10H21.200V16.200H12.600Z" />
                </svg>
              </StripIcon>
              <StripIcon $h={33}><BsMarkdownFill size={25} /></StripIcon>
              <StripIcon $h={35}>
                <svg width="22" height="22" viewBox="0 0 22 22" fill="none" stroke="#2487f8" strokeWidth="1.700">
                  <circle cx="11" cy="11" r="8" />
                  <path d="M11 0V6.500M11 15.500V22M0 11H6.500M15.500 11H22" strokeWidth="2" />
                </svg>
              </StripIcon>
              <StripIcon $h={31}>
                <svg width="22" height="23" viewBox="0 0 22 23" fill="none" stroke="#dcdcdc" strokeWidth="1.700">
                  <circle cx="4.200" cy="11.500" r="3.200" /><circle cx="17.800" cy="4.200" r="3.200" /><circle cx="17.800" cy="18.800" r="3.200" />
                  <path d="M7 10L15 5.700M7 13L15 17.300" />
                </svg>
              </StripIcon>
            </ToolStrip>

            <Explorer>
              <ExplorerHead>
                <PanelTitle>MODEL EXPLORER</PanelTitle>
                <SearchField><FaSearch size={14} /></SearchField>
                <svg width="11" height="15" viewBox="0 0 11 15" fill="#c8caca"><path d="M5.500 0L11 5.600H0ZM5.500 15L11 9.400H0Z" /></svg>
              </ExplorerHead>
              <TreeArea>
                <TreeClip>
                  {tree.map(([kind, label], i) => (
                    <TreeRow key={i} $leaf={kind !== "object"}>
                      <Twisty $w={kind === "object" ? 17.5 : 16.5}>
                        {kind === "object" && <svg width="9" height="9" viewBox="0 0 9 9"><path d="M8.500 .5V8.500H.5Z" fill="#dedede" /></svg>}
                        {kind === "link" && <svg width="7" height="11" viewBox="0 0 7 11"><path d="M.5 .5L6.500 5.500L.5 10.500Z" fill="#dedede" /></svg>}
                      </Twisty>
                      <NodeLabel $selected={i === tree.length - 1} $gap={labelGap[kind]}>
                        {kind === "object" ? <ObjectIcon /> : kind === "slot" ? <SlotIcon /> : <LinkIcon />}
                        {label}
                      </NodeLabel>
                    </TreeRow>
                  ))}
                </TreeClip>
                <TreeThumb />
              </TreeArea>
              <TreeFoot><TreeThumbH /><TreeCorner /></TreeFoot>
              <Editors><PanelTitle>EDITORS</PanelTitle></Editors>
            </Explorer>
          </Body>
          <StatusBar>
            <StatusCell $w={41}><FaCheckCircle size={18} color="#7ec636" /></StatusCell>
            <StatusCell $w={70}>100%</StatusCell>
          </StatusBar>
        </AppWindow>

        <Taskbar>
          <Weather>
            <WeatherIcon>
              <svg width="34" height="34" viewBox="0 0 34 34">
                <defs><linearGradient id="sun" x1="0" y1="0" x2="0" y2="1"><stop offset="0" stopColor="#ffcb05" /><stop offset="1" stopColor="#f0700a" /></linearGradient></defs>
                <circle cx="16" cy="17" r="12.500" fill="url(#sun)" />
                <path d="M8 10H12M8 15H28M3 20H20M24 20H25M3 25H25" stroke="#fbe3bb" strokeWidth="3" strokeLinecap="round" />
              </svg>
              <Badge $c="#f98e93" $x={14.5} $y={-5}>1</Badge>
            </WeatherIcon>
            <TwoLines $align="left" $w={60}>87°F<Dim>Haze</Dim></TwoLines>
          </Weather>
          <StartSlot>
            <svg width="30" height="30" viewBox="0 0 30 30">
              <defs><linearGradient id="win" x1="0" y1="0" x2="1" y2="1"><stop offset="0" stopColor="#7fe6fd" /><stop offset="1" stopColor="#0f93f5" /></linearGradient></defs>
              <path d="M0 1Q0 0 1 0H14.400V14.400H0ZM15.600 0H29Q30 0 30 1V14.400H15.600ZM0 15.600H14.400V30H1Q0 30 0 29ZM15.600 15.600H30V29Q30 30 29 30H15.600Z" fill="url(#win)" />
            </svg>
          </StartSlot>
          <SearchPill>
            <svg width="19" height="20" viewBox="0 0 19 20" fill="none" stroke="#d6dae2" strokeWidth="2"><circle cx="8" cy="8" r="6.800" /><path d="M12.600 13L18 19" /></svg>
            <span>Search</span>
            <GiftIcon />
          </SearchPill>
          <TaskButton><TaskViewIcon /></TaskButton>
          <TaskButton><CopilotIcon /></TaskButton>
          <TaskButton><FolderIcon /></TaskButton>
          <TaskButton><EdgeIcon /></TaskButton>
          <TaskButton><StoreIcon /><Badge $c="#96928f" $x={26} $y={7}>2</Badge></TaskButton>
          <TaskButton><HelpIcon /><Badge $c="#fdbd0c" $x={26} $y={7} /></TaskButton>
          <TaskButton><McAfeeIcon /></TaskButton>
          <TaskButton><HpTile>my<b>hp</b></HpTile></TaskButton>
          <TaskButton><OutlookIcon /></TaskButton>
          <TaskButton><BraveMark><SiBrave size={30} color="#f8471d" /></BraveMark></TaskButton>
          <TaskButton><ChromeIcon /><Running $w={8} $b={1} /></TaskButton>
          <TaskButton><FaWhatsapp size={33} color="#23d264" /><Running $w={8} $b={1} /></TaskButton>
          <TaskButton $active><Star size={29} /><Running $w={20} $b={0} /></TaskButton>

          <Tray>
            <TraySlot $w={36}><svg width="14" height="9" viewBox="0 0 14 9" fill="none" stroke="#fff" strokeWidth="2"><path d="M1 8L7 1.800L13 8" /></svg></TraySlot>
            <TraySlot $w={41}>
              <svg width="22" height="22" viewBox="0 0 22 22" fill="none" stroke="#fff" strokeWidth="1.300">
                <path d="M1.500 9.500A8.500 8.500 0 0 1 19 7.500M19.500 1.500V7.500H13.600M11 19.600A8.500 8.500 0 0 1 2.500 15M2 20V14.400H7.800" />
                <circle cx="16" cy="15.500" r="5.200" fill="#ff980f" stroke="none" />
              </svg>
            </TraySlot>
            <TraySlot $w={36}>
              <svg width="21" height="18" viewBox="0 0 21 18">
                <path d="M4 13.500A4 4 0 0 1 4 5.500A6 6 0 0 1 15 4A4.500 4.500 0 0 1 17 12L12 13.500Z" fill="#a4a4a4" />
                <path d="M3 13A4 4 0 0 1 5 6Q9 6 11 13Z" fill="#dedede" />
                <circle cx="15" cy="12.300" r="5.600" fill="#55c1f5" /><path d="M15 11.500V15.500M15 8.600V10.200" stroke="#11314a" strokeWidth="1.600" />
              </svg>
            </TraySlot>
            <TwoLines $align="center" $w={44}>ENG<br />IN</TwoLines>
            <TraySlot $w={16} />
            <TraySlot $w={30}>
              <svg width="20" height="16" viewBox="0 0 20 16" fill="none" stroke="#fff" strokeWidth="1.500" strokeLinecap="round">
                <path d="M1 5.500Q10 -3 19 5.500M3.800 8.500Q10 2.500 16.200 8.500M6.500 11.300Q10 8 13.500 11.300" /><circle cx="10" cy="13.800" r="1.200" fill="#fff" />
              </svg>
            </TraySlot>
            <TraySlot $w={29}>
              <svg width="21" height="17" viewBox="0 0 21 17" fill="none" stroke="#fff" strokeWidth="1.300" strokeLinecap="round">
                <path d="M1 6V11H4L8.500 15V2L4 6Z" /><path d="M11 6Q12.600 8.500 11 11" /><path d="M13.500 4Q16.200 8.500 13.500 13" /><path d="M16 2Q20.500 8.500 16 15" stroke="#777" />
              </svg>
            </TraySlot>
            <TraySlot $w={30}>
              <svg width="21" height="18" viewBox="0 0 21 18" fill="none" stroke="#fff" strokeWidth="1.500">
                <path d="M10 4.500H16.500Q18 4.500 18 6V14Q18 15.500 16.500 15.500H4" /><path d="M19.800 8V12" strokeWidth="1.800" />
                <path d="M1 17Q2 14 4 12Q-1 10 2 5L6 1L8 5Q10 10 5 12Z" fill="#fff" stroke="none" />
              </svg>
            </TraySlot>
            <TwoLines $align="right" $w={80} $ls={-0.24}>4:01 PM<br />1/30/2025</TwoLines>
          </Tray>
        </Taskbar>
      </Desktop>
    </>
  );
}
